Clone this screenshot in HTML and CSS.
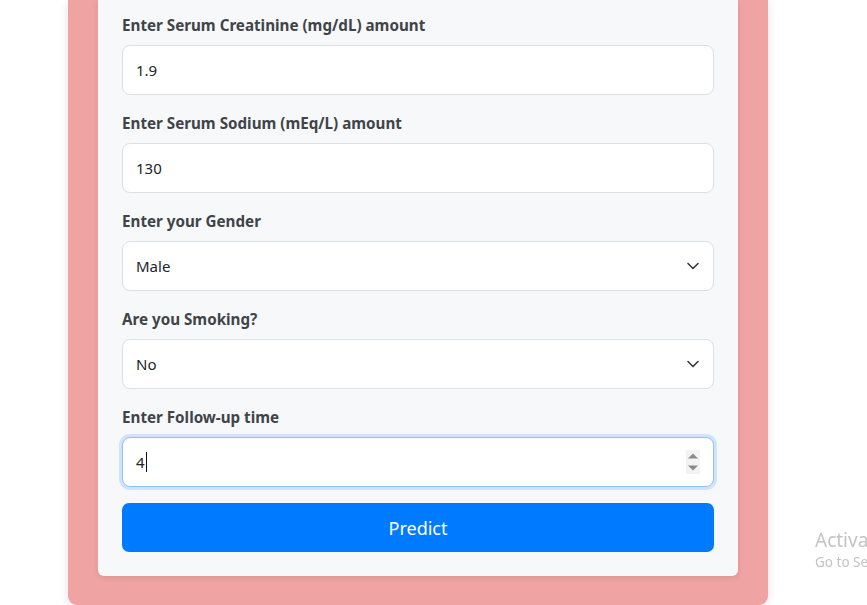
FILE: index.html
```html
<!DOCTYPE html>
<html>
<head>
<meta charset="utf-8">
<link rel="stylesheet" href="styles.css">
</head>
<body>
<div class="panel">
  <form class="card">
    <div class="group">
      <label class="label">Enter Serum Creatinine (mg/dL) amount</label>
      <input class="field" type="text" value="1.9">
    </div>
    <div class="group">
      <label class="label">Enter Serum Sodium (mEq/L) amount</label>
      <input class="field" type="text" value="130">
    </div>
    <div class="group">
      <label class="label">Enter your Gender</label>
      <div class="select-wrap">
        <select class="field select"><option>Male</option><option>Female</option></select>
        <svg class="chev" width="12" height="8" viewBox="0 0 12 8"><path d="M1 1.5 6 6.5 11 1.5" fill="none" stroke="#343a40" stroke-width="1.6" stroke-linecap="round" stroke-linejoin="round"/></svg>
      </div>
    </div>
    <div class="group">
      <label class="label">Are you Smoking?</label>
      <div class="select-wrap">
        <select class="field select"><option>No</option><option>Yes</option></select>
        <svg class="chev" width="12" height="8" viewBox="0 0 12 8"><path d="M1 1.5 6 6.5 11 1.5" fill="none" stroke="#343a40" stroke-width="1.6" stroke-linecap="round" stroke-linejoin="round"/></svg>
      </div>
    </div>
    <div class="group last">
      <label class="label">Enter Follow-up time</label>
      <div class="field focus">
        <span class="val">4</span><span class="caret"></span>
        <span class="spin">
          <svg width="14" height="24" viewBox="0 0 14 24"><path d="M2 8.5 7 3.5 12 8.5Z" fill="#8a8a8a"/><path d="M2 15.5 7 20.5 12 15.5Z" fill="#8a8a8a"/></svg>
        </span>
      </div>
    </div>
    <button class="btn" type="button">Predict</button>
  </form>
</div>
<div class="watermark">
  <div class="wm1">Activate Windows</div>
  <div class="wm2">Go to Settings to activate Windows.</div>
</div>
</body>
</html>
```
FILE: styles.css
```css
html, body {
  margin: 0;
  padding: 0;
  background: #ffffff;
  overflow: hidden;
  height: 605px;
}
body {
  font-family: "Noto Sans", "Open Sans", sans-serif;
}
.panel {
  width: 640px;
  margin-left: 68px;
  padding: 0 30px 29px;
  background: #efa3a2;
  border-radius: 0 0 9px 9px;
  box-shadow: 0 2px 10px rgba(0,0,0,0.12);
}
.card {
  display: flex;
  flex-direction: column;
  background: #f7f8fa;
  padding: 14px 24px 24px;
  border-radius: 0 0 6px 6px;
  box-shadow: 0 2px 6px rgba(0,0,0,0.08);
}
.group {
  display: flex;
  flex-direction: column;
  margin-bottom: 17px;
}
.group.last {
  margin-bottom: 16px;
}
.label {
  display: block;
  height: 23px;
  font-size: 15.2px;
  font-weight: 700;
  color: #3f4449;
  line-height: 23px;
  margin-bottom: 8px;
}
.field {
  box-sizing: border-box;
  width: 100%;
  height: 50px;
  margin: 0;
  padding: 0 13px;
  background: #ffffff;
  border: 1px solid #dcdfe4;
  border-radius: 8px;
  font-family: "Noto Sans", "Open Sans", sans-serif;
  font-size: 15px;
  color: #212529;
  outline: none;
}
.select-wrap {
  position: relative;
}
.select {
  appearance: none;
  -webkit-appearance: none;
  display: block;
}
.chev {
  position: absolute;
  right: 15px;
  top: 21px;
}
.focus {
  display: flex;
  align-items: center;
  border-color: #8fc0fb;
  box-shadow: 0 0 0 3px #cfe3fd;
}
.val {
  line-height: 20px;
}
.caret {
  width: 1px;
  height: 20px;
  background: #111;
  margin-left: 1px;
}
.spin {
  margin-left: auto;
  margin-right: 0;
  width: 14px;
  height: 24px;
  background: #f3f3f3;
  display: flex;
}
.btn {
  height: 49px;
  border: none;
  border-radius: 7px;
  background: #007bff;
  color: #ffffff;
  font-family: "Noto Sans", "Open Sans", sans-serif;
  font-size: 18px;
  cursor: pointer;
}
.watermark {
  position: fixed;
  left: 815px;
  top: 527px;
  white-space: nowrap;
  color: #c4c4c4;
  font-family: "Noto Sans", "Open Sans", sans-serif;
}
.wm1 {
  font-size: 19px;
  line-height: 26px;
}
.wm2 {
  font-size: 13.5px;
  line-height: 18px;
}
```
